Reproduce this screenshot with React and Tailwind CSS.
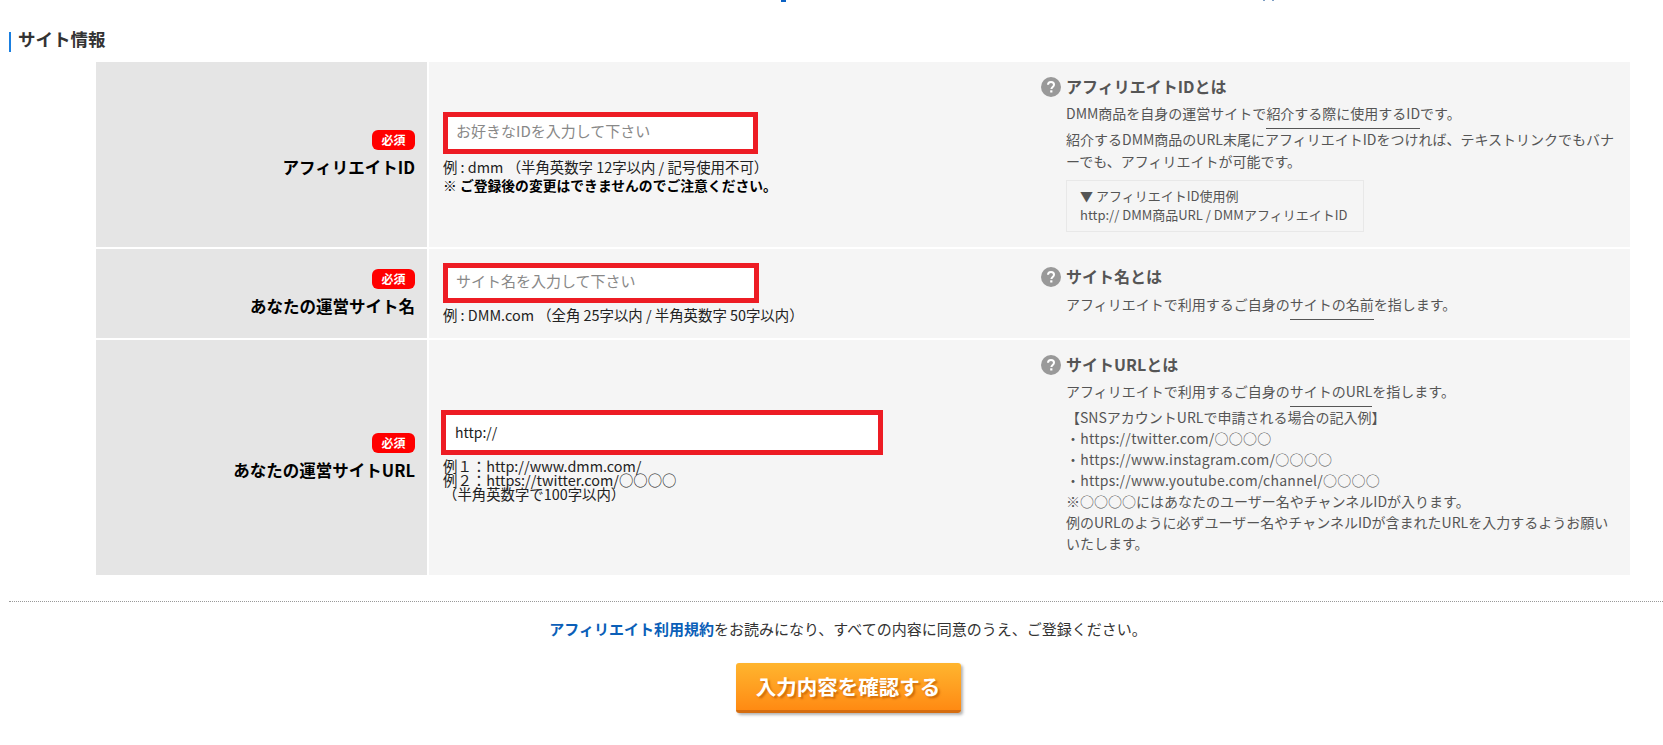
const font = "font-['Noto_Sans_CJK_JP',sans-serif]"

function Badge() {
  return (
    <span className="flex h-5 w-[43px] items-center justify-center rounded-md bg-[#ff0000] text-[12px] leading-none font-bold text-white">
      必須
    </span>
  )
}

function FieldLabel({ children }) {
  return (
    <div className="flex flex-col items-end justify-center gap-[6px] bg-[#e5e5e5] pr-3 pb-[2px]">
      <Badge />
      <div className="text-[16.5px] leading-[22px] font-bold text-black">{children}</div>
    </div>
  )
}

function HelpHead({ children }) {
  return (
    <div className="flex items-center gap-[5px] text-[16px] leading-5 font-bold text-[#555]">
      <svg width="20" height="20" viewBox="0 0 20 20" className="shrink-0">
        <circle cx="10" cy="10" r="10" fill="#999" />
        <path d="M7 7.8C7 6 8.4 5 10 5s3 1 3 2.7c0 2.2-2.6 2.3-2.6 4.3" fill="none" stroke="#fff" strokeWidth="2" />
        <rect x="9.2" y="13.3" width="2.2" height="2.2" fill="#fff" />
      </svg>
      <span className="-translate-y-px">{children}</span>
    </div>
  )
}

function Mark({ children }) {
  return <span className="border-b border-[#555] pb-[5px]">{children}</span>
}

export default function App() {
  return (
    <div className={`h-[745px] overflow-hidden bg-white ${font}`}>
      <div className="flex h-[2px] overflow-hidden pl-[781px]">
        <div className="h-[2px] w-[5px] bg-[#0b62c4]"></div>
        <div className="ml-[477px] h-px w-[2px] bg-[#7f9fc4]"></div>
        <div className="ml-[7px] h-px w-[2px] bg-[#7f9fc4]"></div>
      </div>

      {/* heading */}
      <div className="mt-[30px] ml-[9px] flex h-5 items-center border-l-2 border-[#1a7fe0] pl-[7px]">
        <span className="-translate-y-[3px] text-[17.5px] font-bold text-[#333]">サイト情報</span>
      </div>

      {/* form table */}
      <div className="mt-[10px] ml-[96px] flex w-[1534px] flex-col gap-[2px]">
        <div className="grid h-[185px] grid-cols-[331px_1fr] grid-rows-[185px] gap-[2px]">
          <FieldLabel>アフィリエイトID</FieldLabel>
          <div className="flex bg-[#f5f5f5]">
            <div className="flex w-[612px] flex-col justify-center pb-[3px] pl-[14px]">
              <input
                placeholder="お好きなIDを入力して下さい"
                className="h-[42px] w-[315px] border-[5px] border-[#ed1c24] bg-white px-2 pb-[5px] text-[15px] outline-none placeholder:text-[#888]"
              />
              <p className="mt-[3px] text-[14.4px] leading-[19px] text-[#222]">例 : dmm （半角英数字 12字以内 / 記号使用不可）</p>
              <p className="text-[13.8px] leading-[19px] font-bold text-black">※ ご登録後の変更はできませんのでご注意ください。</p>
            </div>
            <div className="w-[580px] pt-[15px] text-[#555]">
              <HelpHead>アフィリエイトIDとは</HelpHead>
              <div className="pl-[25px] text-[14px] leading-[22px]">
                <p className="mt-[5px]">DMM商品を自身の運営サイトで<Mark>紹介する際に使用するID</Mark>です。</p>
                <p className="mt-[4px]">紹介するDMM商品のURL末尾にアフィリエイトIDをつければ、テキストリンクでもバナーでも、アフィリエイトが可能です。</p>
                <div className="mt-[8px] w-[298px] border border-[#e8e8e8] px-[13px] pt-[5px] pb-[7px] text-[13px] leading-[19px] whitespace-nowrap">
                  <p>▼ アフィリエイトID使用例</p>
                  <p>http:// DMM商品URL / DMMアフィリエイトID</p>
                </div>
              </div>
            </div>
          </div>
        </div>

        <div className="grid h-[89px] grid-cols-[331px_1fr] grid-rows-[89px] gap-[2px]">
          <FieldLabel>あなたの運営サイト名</FieldLabel>
          <div className="flex bg-[#f5f5f5]">
            <div className="flex w-[612px] flex-col justify-center pl-[14px]">
              <input
                placeholder="サイト名を入力して下さい"
                className="h-10 w-[316px] border-[5px] border-[#ed1c24] bg-white px-2 pb-1 text-[15px] outline-none placeholder:text-[#888]"
              />
              <p className="mt-[2px] text-[14.4px] leading-5 text-[#222]">例 : DMM.com （全角 25字以内 / 半角英数字 50字以内）</p>
            </div>
            <div className="w-[580px] pt-[18px] text-[#555]">
              <HelpHead>サイト名とは</HelpHead>
              <div className="pl-[25px] text-[14px] leading-[22px]">
                <p className="mt-[6px]">アフィリエイトで利用するご自身の<Mark>サイトの名前</Mark>を指します。</p>
              </div>
            </div>
          </div>
        </div>

        <div className="grid h-[235px] grid-cols-[331px_1fr] grid-rows-[235px] gap-[2px]">
          <FieldLabel>あなたの運営サイトURL</FieldLabel>
          <div className="flex bg-[#f5f5f5]">
            <div className="flex w-[612px] flex-col justify-center pb-[5px] pl-[12px]">
              <input
                defaultValue="http://"
                className="h-[45px] w-[442px] border-[5px] border-[#ed1c24] bg-white px-[9px] text-[14px] text-[#222] outline-none"
              />
              <div className="mt-[4px] pl-[2px] text-[14.4px] leading-[14px] text-[#222]">
                <p>例１：http://www.dmm.com/</p>
                <p>例２：https://twitter.com/○○○○</p>
                <p>（半角英数字で100字以内）</p>
              </div>
            </div>
            <div className="w-[580px] pt-[15px] text-[#555]">
              <HelpHead>サイトURLとは</HelpHead>
              <div className="pl-[25px] text-[14px] leading-[21px]">
                <p className="mt-[6px]">アフィリエイトで利用するご自身の<Mark>サイトのURL</Mark>を指します。</p>
                <p className="mt-[5px]">【SNSアカウントURLで申請される場合の記入例】</p>
                <p className="tracking-[0.25px]">・https://twitter.com/○○○○</p>
                <p className="tracking-[0.25px]">・https://www.instagram.com/○○○○</p>
                <p className="tracking-[0.25px]">・https://www.youtube.com/channel/○○○○</p>
                <p>※○○○○にはあなたのユーザー名やチャンネルIDが入ります。</p>
                <p>例のURLのように必ずユーザー名やチャンネルIDが含まれたURLを入力するようお願いいたします。</p>
              </div>
            </div>
          </div>
        </div>
      </div>

      {/* agreement */}
      <div className="mt-[26px] ml-[9px] border-t border-dotted border-[#999]"></div>
      <div className="pl-[33px]">
        <p className="mt-[17px] text-center text-[15px] leading-[20px] text-[#333]">
          <a className="font-bold text-[#0b5fb8]">アフィリエイト利用規約</a>をお読みになり、すべての内容に同意のうえ、ご登録ください。
        </p>
        <div className="mt-6 flex justify-center">
          <button className="h-[50px] w-[225px] rounded-[3px] border-b-[3px] border-[#d56d10] bg-gradient-to-b from-[#ffb52e] to-[#ff8a12] text-[20.5px] font-bold text-white shadow-[2px_2px_3px_rgba(0,0,0,0.3)] [text-shadow:2px_2px_2px_rgba(190,90,0,0.7)]">
            入力内容を確認する
          </button>
        </div>
      </div>
    </div>
  )
}
